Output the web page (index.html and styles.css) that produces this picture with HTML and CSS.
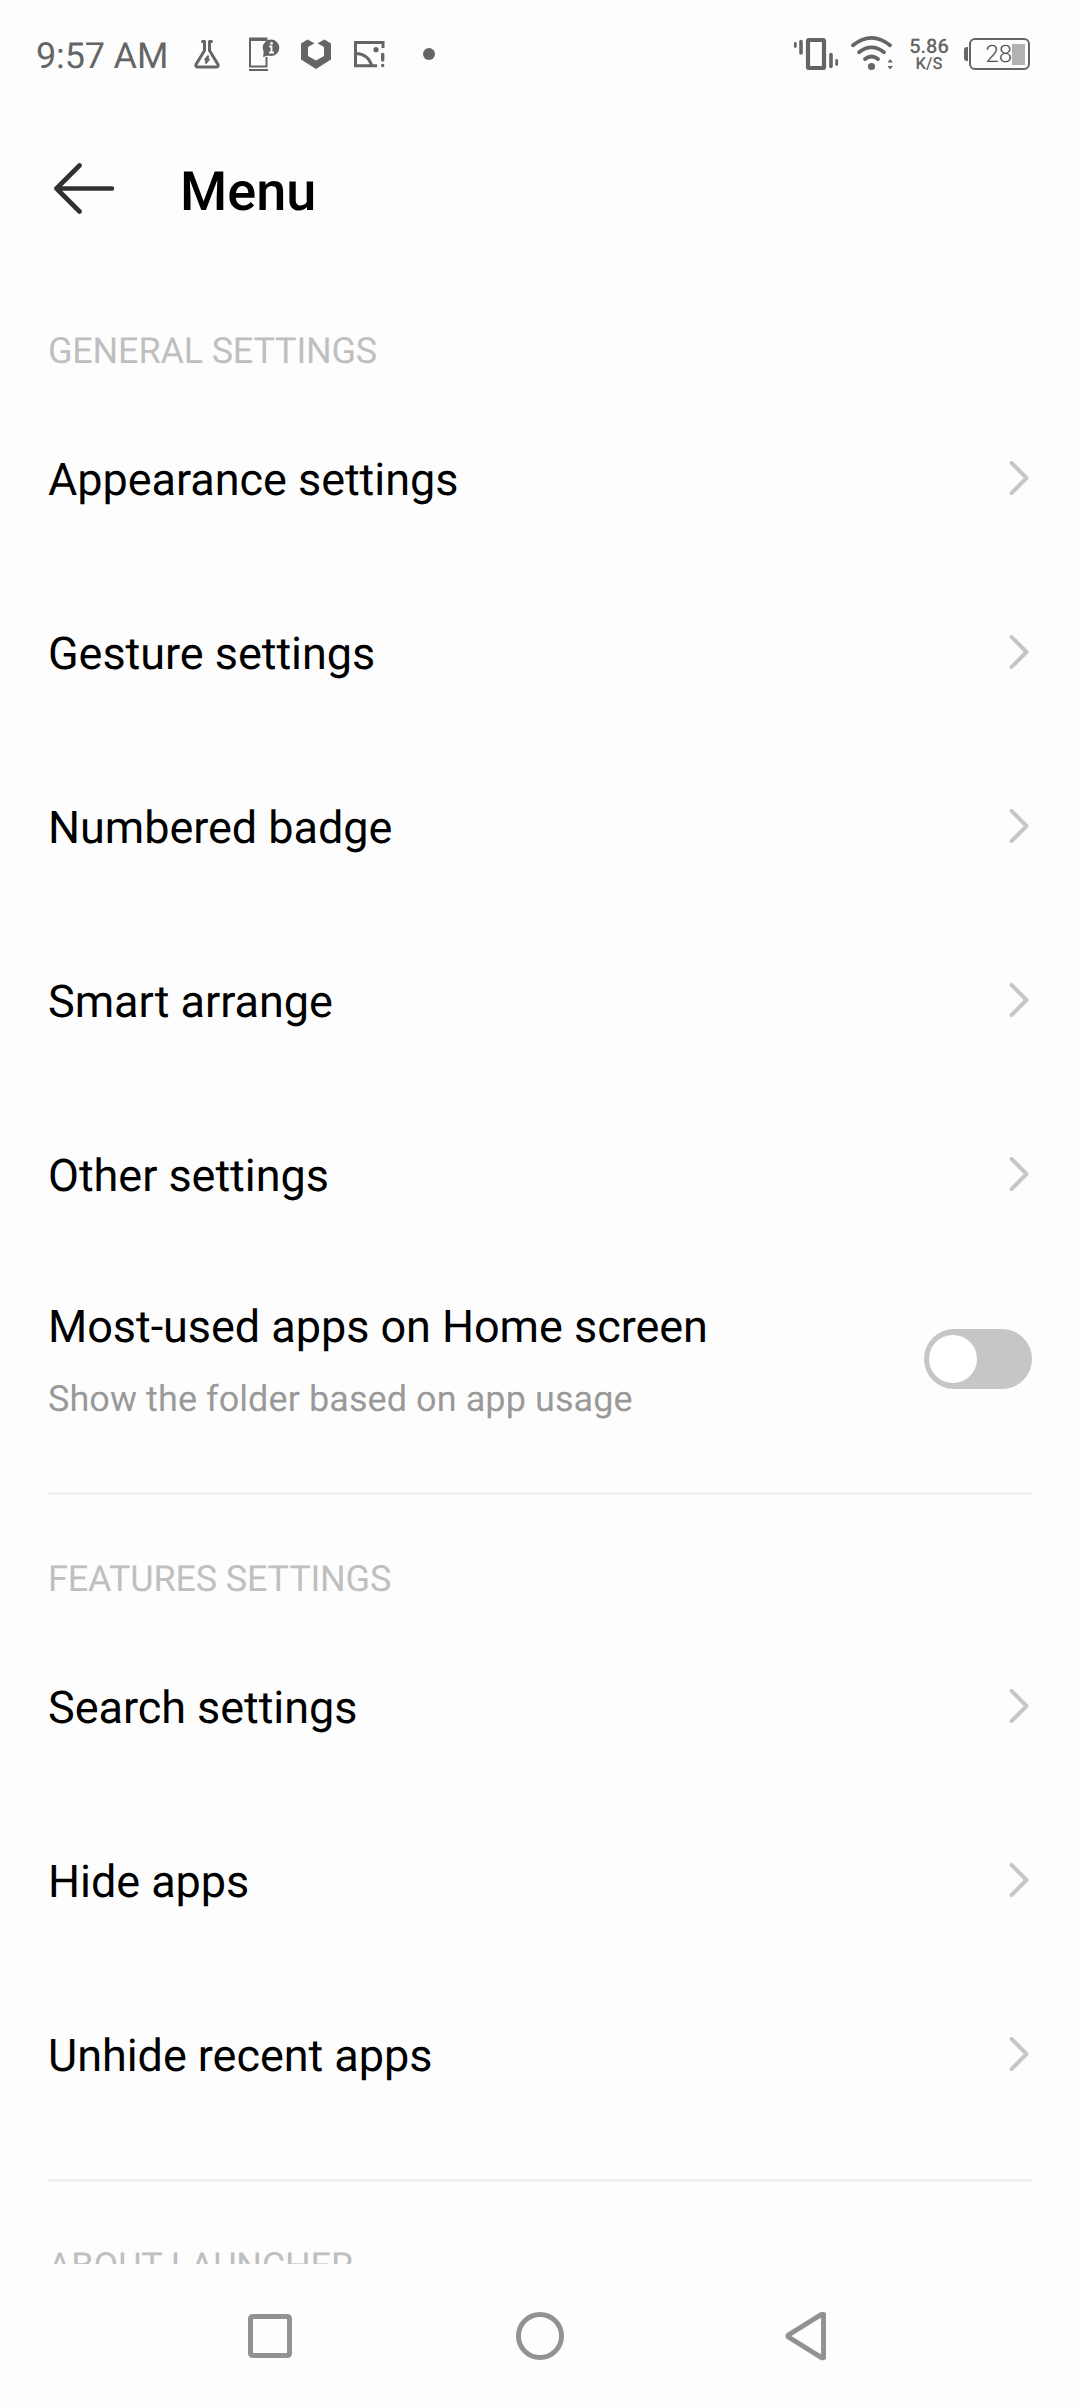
FILE: index.html
```html
<!DOCTYPE html>
<html lang="en">
<head>
<meta charset="utf-8">
<title>Menu</title>
<link rel="stylesheet" href="styles.css">
</head>
<body>
<div class="screen">
  <header class="status">
    <div class="status-group">
      <span class="time">9:57 AM</span>
      <svg class="flask" width="30" height="60" viewBox="192 20 30 60" fill="none" stroke="#656565" stroke-width="3" stroke-linecap="round" stroke-linejoin="round">
        <path d="M202.500 41.500H204.500V50.500L196 64.500Q195 67 198 67H216Q219 67 218 64.500L209.500 50.500V41.500H211.500"/>
        <path d="M208 56.500L205.500 59.500H208.500L206 62.500" stroke-width="2.500"/>
      </svg>
      <svg class="device" width="32" height="60" viewBox="248 20 32 60">
        <path d="M249 37.500H267.500V41H251V65.500H265.500V57H267.500V67.500H249Z M249 69H268V71H249Z" fill="#656565"/>
        <circle cx="271" cy="47.800" r="8.300" fill="#656565"/>
        <path d="M264 50L263 57L270 55Z" fill="#656565"/>
        <path d="M269.200 46.500H271.500V52M269 52.500H274" fill="none" stroke="#fdfdfd" stroke-width="1.800"/>
        <circle cx="271.500" cy="43.300" r="1.400" fill="#fdfdfd"/>
      </svg>
      <svg class="hexagon" width="32" height="60" viewBox="300 20 32 60">
        <path d="M307.500 39.500L314.500 43.300L308 47V56L316 60.500L324 56V47L317.500 43.300L324.500 39.500L331 43.500V59.500L316 69L301 59.500V43.500Z" fill="#656565"/>
      </svg>
      <svg class="photo" width="34" height="60" viewBox="353 20 34 60" fill="none" stroke="#656565" stroke-width="3">
        <path d="M383 48V42.500H355.500V65.800H377M356 53.500Q368 54 371.500 65"/>
        <circle cx="376" cy="49.700" r="2.600" fill="#656565" stroke="none"/>
        <path d="M382.700 54.500V60M382.700 65.500V65.600" stroke-width="3.400" stroke-linecap="round"/>
      </svg>
      <span class="more-dot"></span>
    </div>
    <div class="status-group">
      <svg class="vibrate" width="46" height="60" viewBox="794 20 46 60" fill="none" stroke="#656565" stroke-linecap="round">
        <rect x="809" y="40" width="16" height="28" rx="1" stroke-width="4.200"/>
        <path d="M802 41.500V53M832 54.500V66.500" stroke-width="3.600"/>
        <path d="M796.300 43.500V46.500M837.700 60.500V64.500" stroke-width="2.800"/>
      </svg>
      <svg class="wifi" width="44" height="60" viewBox="851 20 44 60" fill="none" stroke="#656565" stroke-width="3.800" stroke-linecap="round">
        <path d="M854 45.300Q872.500 30.500 891 45.300M860 52.200Q872.500 42.500 885 52.200M866 59Q872.500 54 879 59"/>
        <circle cx="872.500" cy="66.500" r="3.600" fill="#656565" stroke="none"/>
        <path d="M888.500 62.500L891 59L894 62.500ZM888.500 66L891 69.500L894 66Z" fill="#656565" stroke="none"/>
      </svg>
      <div class="speed"><span class="speed-value">5.86</span><span class="speed-unit">K/S</span></div>
      <div class="battery"><span class="battery-cap"></span><span class="battery-case"><span>28</span><span class="battery-fill"></span></span></div>
    </div>
  </header>

  <div class="toolbar">
    <svg class="back" width="62" height="52" viewBox="53 162 62 52" fill="none" stroke="#303030" stroke-width="4.600" stroke-linecap="round" stroke-linejoin="round"><path d="M79.500 165.500L56.500 188.500L79.500 211.500M56.500 188.500H112"/></svg>
    <h1>Menu</h1>
  </div>

  <main class="settings">
    <h2 class="section-title first">GENERAL SETTINGS</h2>
    <div class="row"><span>Appearance settings</span><svg class="chevron" viewBox="0 0 22 36"><path d="M3.500 2.800L18.500 18L3.500 33.200"/></svg></div>
    <div class="row"><span>Gesture settings</span><svg class="chevron" viewBox="0 0 22 36"><path d="M3.500 2.800L18.500 18L3.500 33.200"/></svg></div>
    <div class="row"><span>Numbered badge</span><svg class="chevron" viewBox="0 0 22 36"><path d="M3.500 2.800L18.500 18L3.500 33.200"/></svg></div>
    <div class="row"><span>Smart arrange</span><svg class="chevron" viewBox="0 0 22 36"><path d="M3.500 2.800L18.500 18L3.500 33.200"/></svg></div>
    <div class="row"><span>Other settings</span><svg class="chevron" viewBox="0 0 22 36"><path d="M3.500 2.800L18.500 18L3.500 33.200"/></svg></div>
    <div class="row toggle-row">
      <div class="labels"><span>Most-used apps on Home screen</span><span class="hint">Show the folder based on app usage</span></div>
      <span class="switch"><span class="knob"></span></span>
    </div>
    <hr class="divider">
    <h2 class="section-title">FEATURES SETTINGS</h2>
    <div class="row"><span>Search settings</span><svg class="chevron" viewBox="0 0 22 36"><path d="M3.500 2.800L18.500 18L3.500 33.200"/></svg></div>
    <div class="row"><span>Hide apps</span><svg class="chevron" viewBox="0 0 22 36"><path d="M3.500 2.800L18.500 18L3.500 33.200"/></svg></div>
    <div class="row"><span>Unhide recent apps</span><svg class="chevron" viewBox="0 0 22 36"><path d="M3.500 2.800L18.500 18L3.500 33.200"/></svg></div>
    <hr class="divider">
    <h2 class="section-title">ABOUT LAUNCHER</h2>
  </main>

  <nav class="navbar">
    <svg width="50" height="50" viewBox="0 0 50 50"><rect x="5.500" y="5.500" width="39" height="39" rx="2"/></svg>
    <svg width="50" height="50" viewBox="0 0 50 50"><circle cx="25" cy="25" r="21.500"/></svg>
    <svg width="50" height="50" viewBox="4 0 50 50"><path d="M42.500 3.500V46.500Q41.500 47 40.500 46.500L7.500 26Q6.500 25 7.500 24L40.500 3.500Q41.500 3 42.500 3.500Z"/></svg>
  </nav>
</div>
</body>
</html>
```
FILE: styles.css
```css
* { box-sizing: border-box; }

body {
  margin: 0;
  background: #fdfdfd;
  color: #000;
  font-family: Roboto, "Liberation Sans", sans-serif;
  text-rendering: geometricPrecision;
}

.screen {
  width: 1080px;
  height: 2408px;
  display: flex;
  flex-direction: column;
  overflow: hidden;
}

svg { display: block; flex: none; }

.status {
  height: 110px;
  padding: 20px 50px 30px 36px;
  display: flex;
  justify-content: space-between;
  color: #656565;
}

.status-group { display: flex; align-items: center; height: 60px; }

.time { width: 156px; font-size: 36px; line-height: 42px; letter-spacing: -0.15px; padding-top: 11px; white-space: nowrap; }
.device { margin-left: 26px; }
.hexagon { margin-left: 20px; }
.photo { margin-left: 21px; }
.more-dot { width: 12px; height: 12px; margin: 8px 0 0 36px; border-radius: 50%; background: #656565; }

.wifi { margin-left: 11px; }

.speed {
  width: 40px;
  margin: 9px 0 0 15px;
  display: flex;
  flex-direction: column;
  align-items: center;
  font-weight: 500;
}
.speed-value { font-size: 20px; line-height: 20px; }
.speed-unit { font-size: 16.500px; line-height: 18px; }

.battery { display: flex; align-items: center; margin: 8px 0 0 15px; }
.battery-cap { width: 4px; height: 14px; border-radius: 3px 0 0 3px; background: #656565; margin-right: 1px; }
.battery-case {
  width: 61px;
  height: 32px;
  border: 2.500px solid #656565;
  border-radius: 6px;
  padding-right: 3px;
  display: flex;
  align-items: center;
  justify-content: flex-end;
  color: #505050;
  font-size: 24px;
  line-height: 28px;
  font-weight: 300;
}
.battery-fill { width: 13px; height: 21px; background: #b2b2b2; }

.toolbar {
  height: 164px;
  padding: 0 53px;
  display: flex;
  align-items: center;
}
.back { margin-bottom: 8px; }
.toolbar h1 { margin: 2px 0 0 65px; font-size: 54px; line-height: 64px; font-weight: 500; }

.settings { height: 1990px; overflow: hidden; padding: 0 48px; }

.section-title {
  margin: 0;
  height: 126px;
  padding-top: 63px;
  font-size: 36px;
  line-height: 42px;
  font-weight: 400;
  letter-spacing: -0.18px;
  color: #bfbfbf;
}
.section-title.first { height: 119px; padding-top: 56px; }

.row {
  height: 174px;
  display: flex;
  align-items: center;
  justify-content: space-between;
  font-size: 45px;
  line-height: 54px;
  letter-spacing: -0.05px;
}

.chevron {
  width: 22px;
  height: 36px;
  margin: 0 2px 4px 0;
  fill: none;
  stroke: #c6c6c6;
  stroke-width: 4;
  stroke-linecap: round;
  stroke-linejoin: round;
}

.toggle-row { height: 193px; }
.labels { display: flex; flex-direction: column; gap: 24px; padding-top: 1px; }
.hint { font-size: 36px; line-height: 42px; letter-spacing: 0.08px; color: #999; }

.switch {
  width: 108px;
  height: 60px;
  margin-bottom: 1px;
  padding: 6px 5px;
  border-radius: 30px;
  background: #c6c6c6;
}
.knob { display: block; width: 48px; height: 48px; border-radius: 50%; background: #fff; }

.divider { height: 3px; margin: 36px 0 0; border: 0; background: #f0f0f0; }

.navbar {
  height: 144px;
  padding: 0 245px;
  display: flex;
  align-items: center;
  justify-content: space-between;
  fill: none;
  stroke: #929292;
  stroke-width: 5;
}
```
